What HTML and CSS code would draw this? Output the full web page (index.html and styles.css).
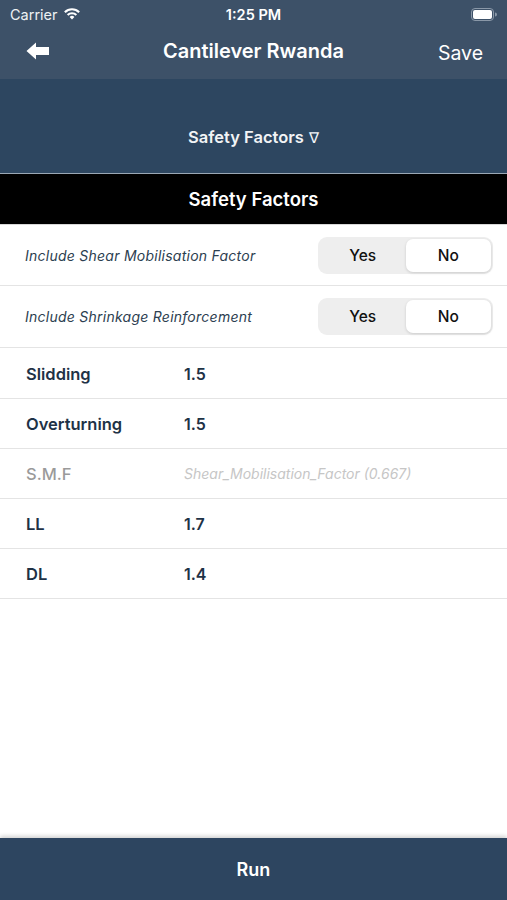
FILE: index.html
```html
<!DOCTYPE html>
<html>
<head>
<meta charset="utf-8">
<link rel="stylesheet" href="styles.css">
</head>
<body>
<div class="app">
  <header class="top">
    <div class="status">
      <div class="st-left">Carrier
        <svg class="wifi" width="18" height="13" viewBox="0 0 18 13"><path d="M9 12.5 L6.6 9.9 A3.4 3.4 0 0 1 11.4 9.9 Z" fill="#fff"/><path d="M3.9 7.3 A7.2 7.2 0 0 1 14.1 7.3 L12.6 8.8 A5.1 5.1 0 0 0 5.4 8.8 Z" fill="#fff"/><path d="M1.1 4.5 A11.2 11.2 0 0 1 16.9 4.5 L15.4 6 A9.1 9.1 0 0 0 2.6 6 Z" fill="#fff"/></svg>
      </div>
      <div class="st-time">1:25 PM</div>
      <div class="st-right">
        <svg width="26" height="13" viewBox="0 0 26 13"><rect x="0.5" y="0.5" width="22" height="12" rx="3.5" fill="none" stroke="#8a98a8" stroke-width="1"/><rect x="2" y="2" width="19" height="9" rx="2" fill="#fff"/><path d="M24 4.5 v4 a2 2 0 0 0 0 -4z" fill="#8a98a8"/></svg>
      </div>
    </div>
    <nav class="navbar">
      <div class="nav-back">
        <svg width="24" height="20" viewBox="0 0 24 20"><path d="M0.5 10 L10 1.5 V6 H23 V14 H10 V18.5 Z" fill="#fff"/></svg>
      </div>
      <div class="nav-title">Cantilever Rwanda</div>
      <div class="nav-save">Save</div>
    </nav>
  </header>
  <div class="picker">Safety Factors <span class="tri">∇</span></div>
  <div class="section-head">Safety Factors</div>
  <div class="list">
    <div class="row toggle-row">
      <span class="toggle-label">Include Shear Mobilisation Factor</span>
      <div class="seg"><span class="seg-item">Yes</span><span class="seg-item sel">No</span></div>
    </div>
    <div class="row toggle-row">
      <span class="toggle-label">Include Shrinkage Reinforcement</span>
      <div class="seg"><span class="seg-item">Yes</span><span class="seg-item sel">No</span></div>
    </div>
    <div class="row val-row"><span class="lbl">Slidding</span><span class="val">1.5</span></div>
    <div class="row val-row"><span class="lbl">Overturning</span><span class="val">1.5</span></div>
    <div class="row val-row"><span class="lbl dim">S.M.F</span><span class="val ph">Shear_Mobilisation_Factor (0.667)</span></div>
    <div class="row val-row"><span class="lbl">LL</span><span class="val">1.7</span></div>
    <div class="row val-row"><span class="lbl">DL</span><span class="val">1.4</span></div>
  </div>
  <div class="spacer"></div>
  <footer class="run">Run</footer>
</div>
</body>
</html>
```
FILE: styles.css
```css
* { box-sizing: border-box; }
html, body { margin: 0; padding: 0; }
body { font-family: Inter, "Liberation Sans", sans-serif; background: #fff; }
.app { width: 507px; height: 900px; display: flex; flex-direction: column; overflow: hidden; }
.top { background: #3d5168; color: #fff; }
.status { height: 28px; display: flex; align-items: center; justify-content: space-between; padding: 0 8px 0 10px; position: relative; }
.st-left { font-size: 14.5px; display: flex; align-items: center; gap: 5px; color: #eef1f4; }
.wifi { margin-top: -2px; }
.st-time { position: absolute; left: 0; right: 0; text-align: center; font-size: 14.5px; font-weight: 600; pointer-events: none; }
.st-right { display: flex; align-items: center; padding-right: 2px; }
.navbar { height: 51px; display: flex; align-items: center; justify-content: space-between; padding: 0 24px 0 26px; position: relative; }
.nav-back { display: flex; align-items: center; margin-top: -5px; }
.nav-title { position: absolute; left: 0; right: 0; text-align: center; font-size: 20px; font-weight: 600; top: 11px; pointer-events: none; }
.nav-save { font-size: 19.5px; margin-top: -1px; }
.picker { height: 95px; background: #2d4660; color: #f2f4f6; display: flex; align-items: center; justify-content: center; font-size: 16.5px; font-weight: 600; padding-top: 22px; border-bottom: 1px solid #9aa7b4; }
.tri { font-weight: 400; margin-left: 5px; font-size: 15px; }
.section-head { height: 51px; background: #000; color: #fff; display: flex; align-items: center; justify-content: center; font-size: 18.5px; font-weight: 600; border-bottom: 1px solid #d8d8d8; }
.row { display: flex; align-items: center; border-bottom: 1px solid #e4e4e4; }
.toggle-row { height: 62px; padding: 0 14px 0 25px; justify-content: space-between; }
.toggle-row:first-child { height: 61px; }
.toggle-label { font-style: italic; font-size: 14px; color: #2c4050; letter-spacing: 0.25px; }
.seg { width: 175px; height: 37px; background: #eeeeee; border-radius: 9px; display: flex; padding: 2px; }
.seg-item { flex: 1; display: flex; align-items: center; justify-content: center; font-size: 15.5px; font-weight: 500; color: #111; }
.seg-item.sel { background: #fff; border-radius: 7px; box-shadow: 0 1px 3px rgba(0,0,0,0.15); }
.val-row { height: 50px; padding-left: 26px; }
.toggle-row + .val-row { height: 51px; padding-top: 1px; }
.lbl { width: 158px; font-size: 16.5px; font-weight: 600; color: #1e3246; }
.lbl.dim { color: #9a9a9a; font-weight: 500; }
.val { font-size: 16px; font-weight: 600; color: #1e3246; }
.val.ph { font-style: italic; font-weight: 400; font-size: 14px; color: #c6c6c6; }
.spacer { flex: 1; }
.run { height: 62px; background: #2d4560; color: #fff; display: flex; align-items: center; justify-content: center; font-size: 18px; font-weight: 600; box-shadow: 0 -2px 4px rgba(0,0,0,0.18); }
```
